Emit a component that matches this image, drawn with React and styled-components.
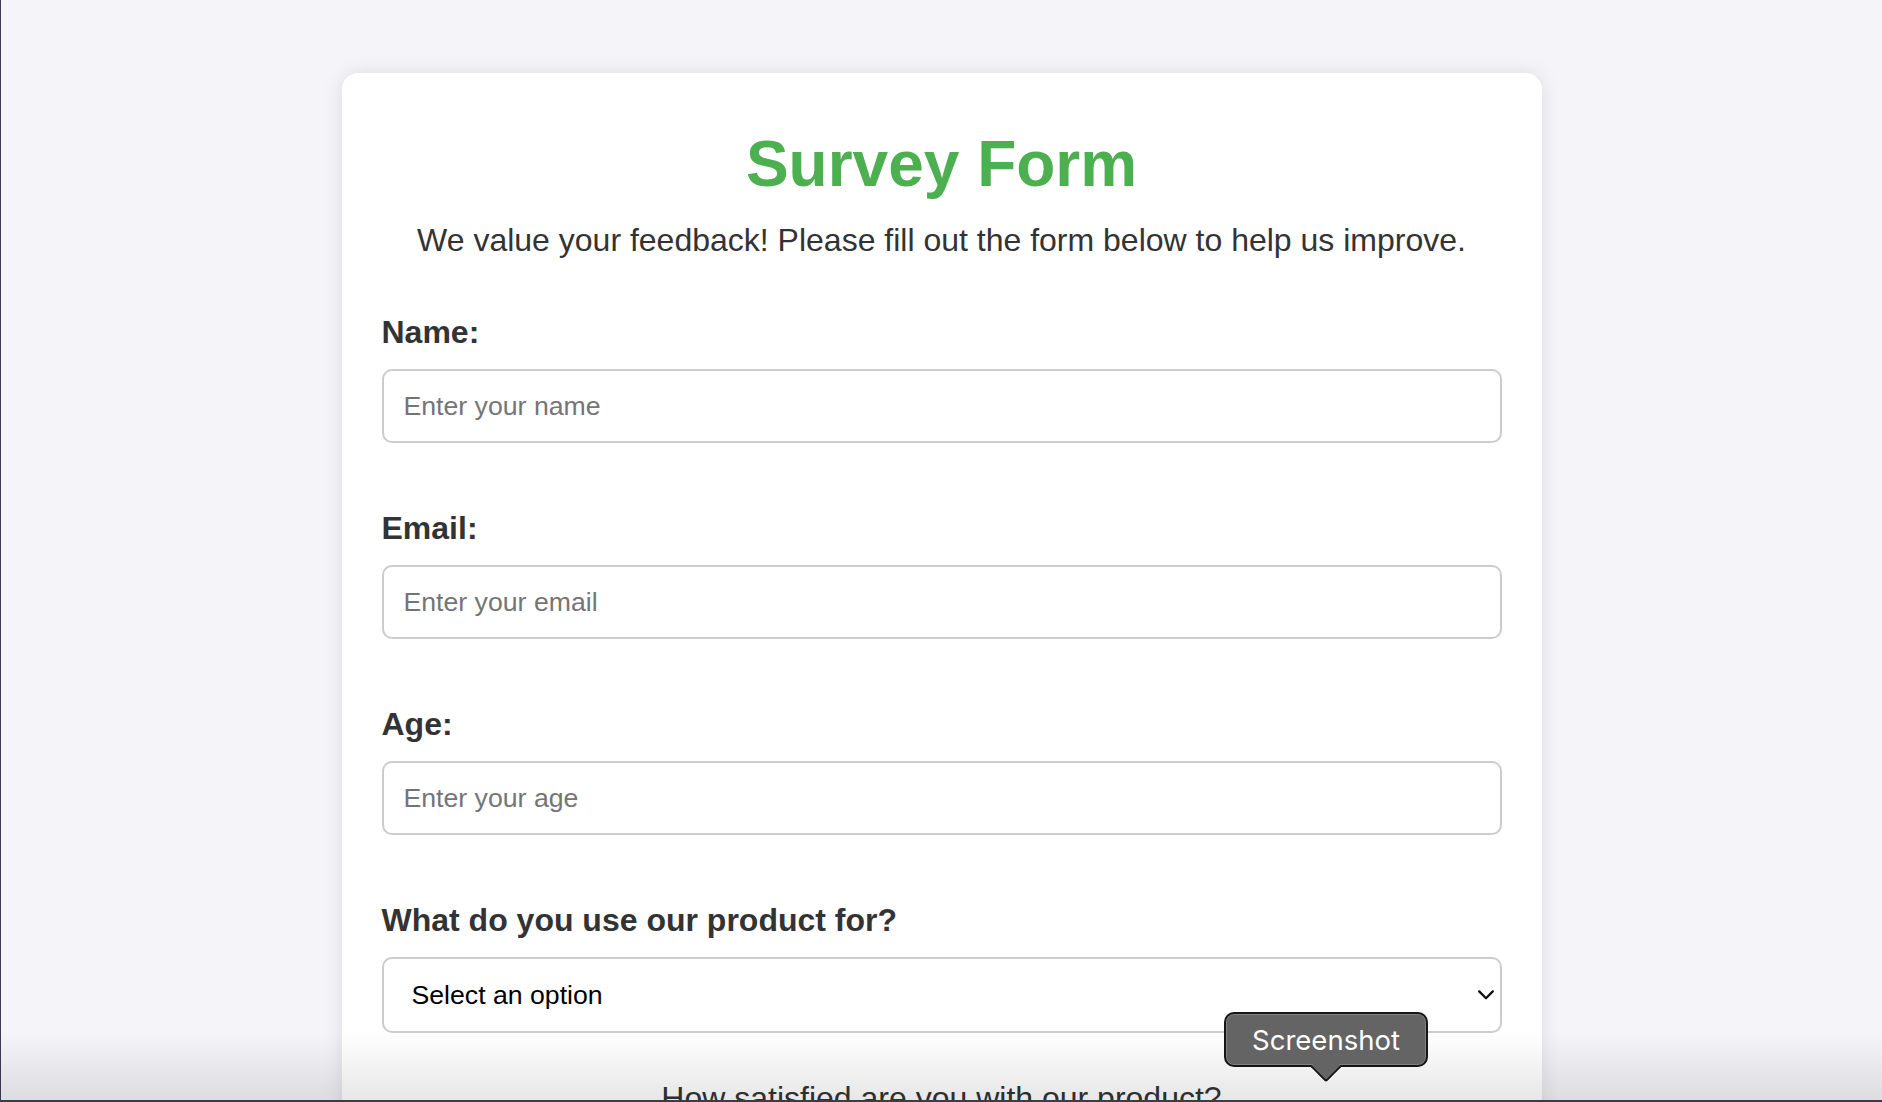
import React from 'react';
import styled, { createGlobalStyle } from 'styled-components';

const GlobalStyle = createGlobalStyle`
	html, body {
		margin: 0;
		padding: 0;
		background-color: #f4f4f9;
		font-family: "Liberation Sans", Arial, Helvetica, sans-serif;
		color: #333;
	}
	body {
		border-left: 1px solid #3c3c5a;
	}
`;

const Page = styled.div`
	padding: 73px 0 60px;
`;

const Card = styled.div`
	box-sizing: border-box;
	width: 1200px;
	margin: 0 auto;
	padding: 40px;
	background-color: #fff;
	border-radius: 16px;
	box-shadow: 0 0 20px rgba(0, 0, 0, 0.1);
`;

const Title = styled.h1`
	margin: 14px 0 0;
	font-size: 64px;
	line-height: 74px;
	font-weight: bold;
	color: #4caf50;
	text-align: center;
`;

const Subtitle = styled.p`
	margin: 21px 0 0;
	font-size: 32px;
	line-height: 37px;
	color: #333;
	text-align: center;
`;

const Form = styled.form`
	margin-top: 55px;
`;

const Group = styled.div`
	margin-bottom: ${props => props.$spacing || 67}px;
	text-align: ${props => (props.$center ? 'center' : 'left')};
`;

const Label = styled.label`
	display: block;
	margin-bottom: 18px;
	font-size: 32px;
	line-height: 37px;
	font-weight: ${props => (props.$plain ? 'normal' : 'bold')};
	color: #333;
`;

const Input = styled.input`
	box-sizing: border-box;
	display: block;
	width: 100%;
	height: 74px;
	padding: 20px;
	border: 2px solid #ccc;
	border-radius: 10px;
	font-family: "Liberation Sans", Arial, sans-serif;
	font-size: 26.67px;
	line-height: 30px;
	color: #000;
	background: #fff;
	outline: none;

	&::placeholder {
		color: #757575;
	}
`;

const SelectWrap = styled.div`
	position: relative;
`;

const Select = styled.select`
	box-sizing: border-box;
	display: block;
	width: 100%;
	height: 76px;
	padding: 0 40px 0 28px;
	border: 2px solid #ccc;
	border-radius: 10px;
	font-family: "Liberation Sans", Arial, sans-serif;
	font-size: 26.67px;
	color: #000;
	background: #fff;
	appearance: none;
	-webkit-appearance: none;
	outline: none;
`;

const Chevron = styled.svg`
	position: absolute;
	right: 8px;
	top: 50%;
	width: 16px;
	height: 10px;
	margin-top: -5px;
	pointer-events: none;
`;

const RadioRow = styled.div`
	display: flex;
	justify-content: center;
	gap: 30px;
	font-size: 28px;
`;

const Textarea = styled.textarea`
	box-sizing: border-box;
	width: 100%;
	height: 200px;
	padding: 20px;
	border: 2px solid #ccc;
	border-radius: 10px;
	font-family: "Liberation Sans", Arial, sans-serif;
	font-size: 26.67px;
	resize: vertical;
`;

const SubmitButton = styled.button`
	width: 100%;
	padding: 24px;
	border: none;
	border-radius: 10px;
	background-color: #4caf50;
	color: #fff;
	font-size: 32px;
	font-family: "Liberation Sans", Arial, sans-serif;
	cursor: pointer;
`;

const BottomShade = styled.div`
	position: fixed;
	left: 0;
	right: 0;
	bottom: 2px;
	height: 68px;
	background: linear-gradient(to bottom, rgba(0, 0, 0, 0), rgba(0, 0, 0, 0.095));
	pointer-events: none;
`;

const BottomBar = styled.div`
	position: fixed;
	left: 0;
	right: 0;
	bottom: 0;
	height: 2px;
	background-color: #3b3b4e;
`;

const Tooltip = styled.div`
	position: fixed;
	left: 1224px;
	top: 1012px;
	box-sizing: border-box;
	width: 204px;
	height: 55px;
	display: flex;
	align-items: center;
	justify-content: center;
	background-color: #646464;
	border: 2px solid #161616;
	border-radius: 10px;
	box-shadow: inset 0 0 0 1px rgba(255, 255, 255, 0.18);
	color: #fff;
	font-family: Inter, "Noto Sans", sans-serif;
	font-size: 27.5px;

	&::after {
		content: '';
		position: absolute;
		left: 50%;
		bottom: -13px;
		width: 22px;
		height: 22px;
		margin-left: -11px;
		background-color: #646464;
		border-right: 2px solid #161616;
		border-bottom: 2px solid #161616;
		border-bottom-right-radius: 3px;
		box-sizing: border-box;
		transform: rotate(45deg);
	}
`;

const TooltipText = styled.span`
	position: relative;
	z-index: 1;
`;

const App = () => {
	return (
		<>
			<GlobalStyle />
			<Page>
				<Card>
					<Title>Survey Form</Title>
					<Subtitle>We value your feedback! Please fill out the form below to help us improve.</Subtitle>
					<Form onSubmit={e => e.preventDefault()}>
						<Group>
							<Label htmlFor="name">Name:</Label>
							<Input id="name" type="text" placeholder="Enter your name" />
						</Group>
						<Group>
							<Label htmlFor="email">Email:</Label>
							<Input id="email" type="email" placeholder="Enter your email" />
						</Group>
						<Group>
							<Label htmlFor="age">Age:</Label>
							<Input id="age" type="number" placeholder="Enter your age" />
						</Group>
						<Group $spacing={47}>
							<Label htmlFor="usage">What do you use our product for?</Label>
							<SelectWrap>
								<Select id="usage" defaultValue="">
									<option value="">Select an option</option>
									<option value="personal">Personal use</option>
									<option value="business">Business</option>
									<option value="education">Education</option>
								</Select>
								<Chevron viewBox="0 0 16 10" fill="none">
									<path d="M1.2 1.4 L8 8.2 L14.8 1.4" stroke="#111" strokeWidth="2.3" strokeLinecap="round" strokeLinejoin="round" />
								</Chevron>
							</SelectWrap>
						</Group>
						<Group $center>
							<Label $plain>How satisfied are you with our product?</Label>
							<RadioRow>
								{['Very satisfied', 'Satisfied', 'Neutral', 'Unsatisfied'].map(option => (
									<label key={option}>
										<input type="radio" name="satisfaction" value={option} /> {option}
									</label>
								))}
							</RadioRow>
						</Group>
						<Group>
							<Label htmlFor="comments">Additional comments:</Label>
							<Textarea id="comments" placeholder="Write your comments here" />
						</Group>
						<SubmitButton type="submit">Submit</SubmitButton>
					</Form>
				</Card>
			</Page>
			<BottomShade />
			<BottomBar />
			<Tooltip>
				<TooltipText>Screenshot</TooltipText>
			</Tooltip>
		</>
	);
};

export default App;
